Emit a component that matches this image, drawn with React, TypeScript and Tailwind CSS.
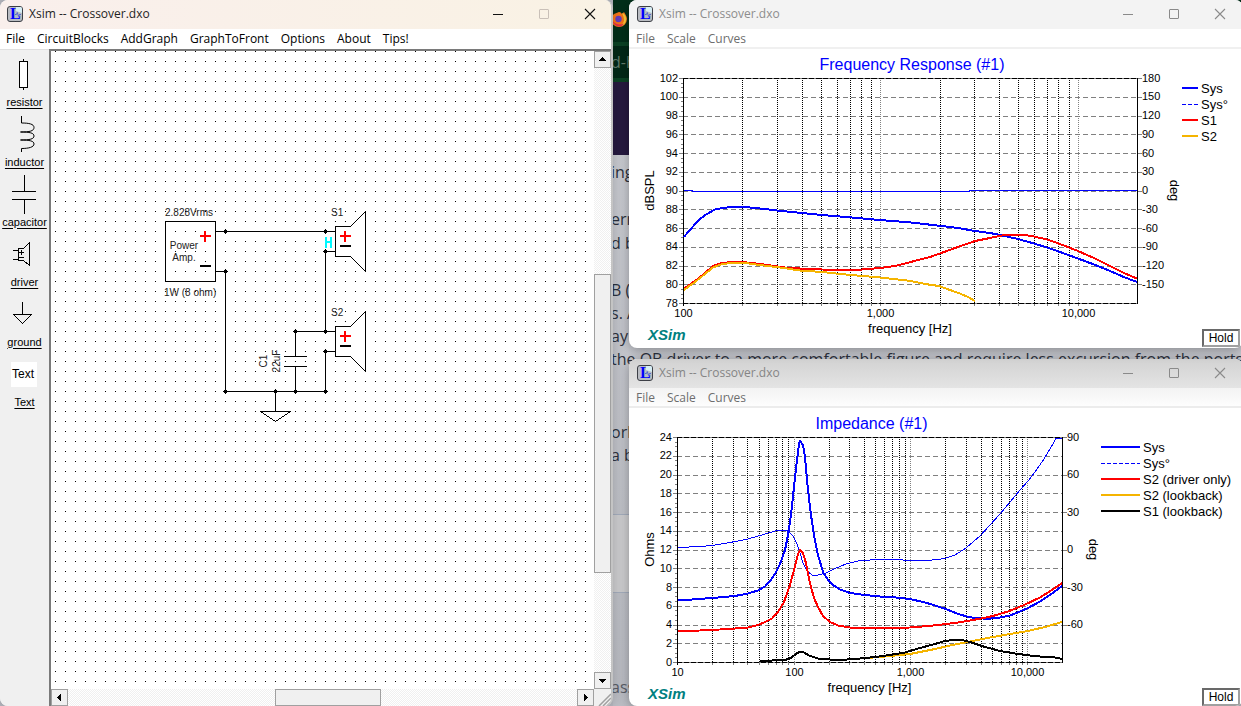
import React from "react";

type Point = [number, number];
type Curve = { color: string; width: number; points: Point[] };
type LegendEntry = { label: string; color: string; dashed?: boolean; width: number };

type ChartSpec = {
  title: string;
  viewBox: string;
  plot: { left: number; right: number; top: number; bottom: number };
  startHz: number;
  decade: number;
  yLabels: string[];
  yTitle: { text: string; gap: number };
  yMinor: number;
  degLabels: string[];
  degEvery: number;
  degGap: number;
  xLabels: [number, string][];
  legend: { x: number; length: number; entries: LegendEntry[] };
  curves: Curve[];
};

const BLUE = "#0000ff";
const RED = "#ff0000";
const AMBER = "#f5b400";

const response: ChartSpec = {
  title: "Frequency Response (#1)",
  viewBox: "629 49 614 299",
  plot: { left: 683, right: 1137, top: 78, bottom: 303 },
  startHz: 100,
  decade: 197.3,
  yLabels: ["102", "100", "98", "96", "94", "92", "90", "88", "86", "84", "82", "80", "78"],
  yTitle: { text: "dBSPL", gap: 29 },
  yMinor: 4,
  degLabels: ["180", "150", "120", "90", "60", "30", "0", "-30", "-60", "-90", "-120", "-150"],
  degEvery: 1,
  degGap: 33,
  xLabels: [
    [100, "100"],
    [1000, "1,000"],
    [10000, "10,000"],
  ],
  legend: {
    x: 1182,
    length: 16,
    entries: [
      { label: "Sys", color: BLUE, width: 2 },
      { label: "Sys°", color: BLUE, dashed: true, width: 1 },
      { label: "S1", color: RED, width: 2 },
      { label: "S2", color: AMBER, width: 2 },
    ],
  },
  curves: [
    { color: BLUE, width: 1, points: [[684, 190.5], [692, 190.5], [693, 191.5], [969, 191.5], [970, 190.5], [1137, 190.5]] },
    {
      color: BLUE,
      width: 2,
      points: [
        [684, 237], [688, 232], [693, 226.5], [700, 219], [706, 214.5], [715, 209.5], [722, 208], [733, 207], [745, 207],
        [760, 208.5], [777, 210.5], [802, 213], [822, 215], [846, 217], [880, 220], [911, 222.5], [939, 225.7], [958, 228],
        [975, 231], [990, 233], [1000, 235], [1018, 239], [1034, 243.5], [1047, 247.5], [1060, 252], [1078, 258.5],
        [1094, 264.5], [1110, 271], [1125, 277.5], [1137, 282],
      ],
    },
    {
      color: RED,
      width: 2,
      points: [
        [684, 288.5], [695, 281], [705, 273], [713, 266], [720, 263.5], [730, 262], [742, 262], [760, 264], [785, 267.5],
        [800, 268.5], [822, 269.5], [846, 270], [862, 269.5], [880, 268], [895, 266], [907, 263], [920, 259.5], [930, 257],
        [940, 253.5], [955, 248], [975, 241], [990, 238], [1002, 235.5], [1012, 234.5], [1022, 234.5], [1034, 236.5],
        [1047, 239.5], [1060, 244], [1078, 251], [1094, 258], [1110, 266], [1125, 273.5], [1137, 278.5],
      ],
    },
    {
      color: AMBER,
      width: 2,
      points: [
        [684, 290], [695, 282], [705, 274], [713, 267.5], [722, 264], [733, 263], [745, 263], [760, 265], [780, 267.5],
        [800, 270.5], [822, 272], [846, 274.5], [880, 277.5], [911, 281], [925, 284], [939, 286], [950, 290], [960, 293.5],
        [968, 297], [975, 301],
      ],
    },
  ],
};

const impedance: ChartSpec = {
  title: "Impedance (#1)",
  viewBox: "629 408 614 299",
  plot: { left: 677, right: 1062, top: 437, bottom: 662 },
  startHz: 10,
  decade: 116.65,
  yLabels: ["24", "22", "20", "18", "16", "14", "12", "10", "8", "6", "4", "2", "0"],
  yTitle: { text: "Ohms", gap: 23 },
  yMinor: 4,
  degLabels: ["90", "60", "30", "0", "-30", "-60"],
  degEvery: 2,
  degGap: 27,
  xLabels: [
    [10, "10"],
    [100, "100"],
    [1000, "1,000"],
    [10000, "10,000"],
  ],
  legend: {
    x: 1101,
    length: 39,
    entries: [
      { label: "Sys", color: BLUE, width: 2 },
      { label: "Sys°", color: BLUE, dashed: true, width: 1 },
      { label: "S2 (driver only)", color: RED, width: 2 },
      { label: "S2 (lookback)", color: AMBER, width: 2 },
      { label: "S1 (lookback)", color: "#000000", width: 2 },
    ],
  },
  curves: [
    {
      color: BLUE,
      width: 1,
      points: [
        [678, 547.5], [700, 546.5], [712, 545.5], [730, 542.5], [748, 539], [760, 535.5], [768, 533], [777, 530.5],
        [788, 531], [793, 536], [797, 544], [800, 553], [803, 563], [807, 571], [812, 575], [818, 575], [826, 573],
        [835, 568.5], [846, 564], [858, 561], [870, 560], [890, 559.5], [910, 560.3], [930, 560.3], [945, 558.5],
        [955, 555], [966, 548], [980, 536], [1000, 514], [1020, 490], [1028, 481], [1035, 472], [1044, 459], [1053, 444],
        [1056, 438.5], [1062, 438.5],
      ],
    },
    {
      color: BLUE,
      width: 2,
      points: [
        [678, 600], [692, 599.5], [712, 598], [735, 596], [748, 593.5], [758, 590.5], [765, 586.5], [770, 581], [775, 574],
        [780, 564], [785, 550], [788, 535], [791, 515], [794, 487], [797, 460], [799, 444], [800, 441], [803, 445],
        [805, 457], [808, 490], [811, 515], [814, 535], [818, 555], [823, 572], [828, 580], [833, 585], [840, 589.5],
        [850, 593], [865, 595], [880, 596.5], [896, 597.5], [910, 599], [925, 602.5], [935, 605.5], [946, 609],
        [958, 614], [967, 616.5], [975, 618], [988, 618.8], [1000, 617.5], [1010, 615.5], [1020, 611.5], [1028, 608],
        [1040, 601.5], [1050, 595], [1062, 586],
      ],
    },
    {
      color: RED,
      width: 2,
      points: [
        [678, 631], [700, 630.5], [712, 630], [735, 628.5], [748, 627.5], [758, 625], [765, 622], [772, 618.5],
        [778, 612], [784, 602], [790, 585], [795, 566], [798, 554], [800, 550], [803, 553], [806, 563], [810, 583],
        [814, 598], [818, 607], [823, 616], [830, 622], [838, 625.5], [850, 627.5], [870, 628.3], [890, 628],
        [910, 627.5], [925, 626.3], [940, 624.8], [958, 622.5], [970, 620.5], [981, 618.5], [993, 616], [1008, 611.5],
        [1024, 605], [1040, 597.5], [1052, 590], [1062, 583],
      ],
    },
    {
      color: AMBER,
      width: 2,
      points: [
        [860, 658.5], [880, 657], [910, 654], [935, 649], [950, 645.5], [960, 643.5], [970, 641.5], [990, 637.5],
        [1010, 634], [1028, 631], [1045, 627], [1062, 622],
      ],
    },
    {
      color: "#000000",
      width: 2,
      points: [
        [760, 661], [785, 660], [791, 658], [797, 653], [802, 651.5], [810, 656], [820, 659], [840, 660], [860, 658.5],
        [875, 657], [890, 655], [905, 652.5], [920, 648], [935, 644], [945, 641], [953, 640], [962, 640], [970, 642],
        [985, 647], [1000, 651], [1015, 653.5], [1030, 655.5], [1045, 657], [1055, 657.5], [1062, 659],
      ],
    },
  ],
};

const toPath = (points: Point[]) => "M" + points.map(([x, y]) => `${x} ${y}`).join("L");

const snap = (v: number) => Math.round(v) + 0.5;

function Chart({ spec }: { spec: ChartSpec }) {
  const { left, right, top, bottom } = spec.plot;
  const rows = spec.yLabels.length - 1;
  const rowStep = (bottom - top) / rows;
  const rowY = (i: number) => snap(top + i * rowStep);
  const labelY = (i: number) => Math.floor(top + i * rowStep) + 4;
  const hzX = (hz: number) => snap(left + spec.decade * Math.log10(hz / spec.startHz));
  const middle = (left + right) / 2;

  const verticals: { x: number; major: boolean }[] = [];
  for (let base = spec.startHz; base <= 10000; base *= 10) {
    for (let m = 1; m < 10; m++) {
      const hz = base * m;
      if (hz > spec.startHz && hz < 20000) verticals.push({ x: hzX(hz), major: m === 1 });
    }
  }

  return (
    <svg
      viewBox={spec.viewBox}
      className="block w-full font-['Liberation_Sans',Arial,sans-serif]"
      role="img"
      aria-label={spec.title}
    >
      <text x={middle + 2} y={top - 8} textAnchor="middle" fontSize="16" fill={BLUE}>
        {spec.title}
      </text>

      <g shapeRendering="crispEdges" fill="none">
        {spec.yLabels.map((_, i) => (
          <path
            key={i}
            d={`M${left} ${rowY(i)}H${right}`}
            stroke="#808080"
            strokeDasharray={i === 0 || i === rows ? undefined : "5 3"}
          />
        ))}
        {verticals.map(({ x, major }) => (
          <path
            key={x}
            d={`M${x} ${top}V${bottom}`}
            stroke={major ? "#808080" : "#000000"}
            strokeDasharray="1 1"
          />
        ))}
        {verticals.map(({ x }) => (
          <path key={x} d={`M${x} ${bottom}v3`} stroke="#808080" />
        ))}
        <path d={`M${left} ${top + 0.5}H${right}M${left} ${bottom + 0.5}H${right}`} stroke="#000000" strokeDasharray="5 2" />
        {spec.yLabels.map((_, i) => (
          <path key={i} d={`M${left - 4} ${rowY(i)}h4`} stroke="#808080" />
        ))}
        {Array.from({ length: rows * spec.yMinor }, (_, i) => (
          <path key={i} d={`M${left - 2} ${snap(top + (i * rowStep) / spec.yMinor)}h2`} stroke="#808080" />
        ))}
        {spec.degLabels.map((label, i) => (
          <path key={label} d={`M${right} ${rowY(i * spec.degEvery)}h5`} stroke="#808080" />
        ))}
        <path d={`M${left + 0.5} ${top}V${bottom + 3}M${right + 0.5} ${top}V${bottom + 1}`} stroke="#000000" />
        {spec.curves.map((curve, i) => (
          <path key={i} d={toPath(curve.points)} stroke={curve.color} strokeWidth={curve.width} strokeLinejoin="round" />
        ))}
      </g>

      <g fontSize="11" fill="#000000">
        {spec.yLabels.map((label, i) => (
          <text key={label} x={left - 5} y={labelY(i)} textAnchor="end">
            {label}
          </text>
        ))}
        {spec.degLabels.map((label, i) => (
          <text key={label} x={right + 5} y={labelY(i * spec.degEvery)}>
            {label}
          </text>
        ))}
        {spec.xLabels.map(([hz, label]) => (
          <text key={label} x={hzX(hz)} y={bottom + 14} textAnchor="middle">
            {label}
          </text>
        ))}
      </g>

      <g fontSize="13" fill="#000000">
        <text x={middle} y={bottom + 30} textAnchor="middle">
          frequency [Hz]
        </text>
        <text transform={`translate(${left - spec.yTitle.gap} ${(top + bottom) / 2}) rotate(-90)`} textAnchor="middle">
          {spec.yTitle.text}
        </text>
        <text transform={`translate(${right + spec.degGap} ${(top + bottom) / 2}) rotate(90)`} textAnchor="middle">
          deg
        </text>
        {spec.legend.entries.map((entry, i) => (
          <g key={entry.label}>
            <path
              d={`M${spec.legend.x} ${top + 10 + i * 16 + (entry.width === 1 ? 0.5 : 0)}h${spec.legend.length}`}
              stroke={entry.color}
              strokeWidth={entry.width}
              strokeDasharray={entry.dashed ? "4 2" : undefined}
              shapeRendering="crispEdges"
            />
            <text x={spec.legend.x + spec.legend.length + 3} y={top + 15 + i * 16}>
              {entry.label}
            </text>
          </g>
        ))}
      </g>

      <text x="648" y={bottom + 37} fontSize="15" fontWeight="bold" fontStyle="italic" fill="#008080">
        XSim
      </text>
    </svg>
  );
}

function AppIcon() {
  return (
    <svg viewBox="0 0 16 16" className="h-4 w-4 shrink-0" aria-hidden="true">
      <rect x="0.5" y="0.5" width="15" height="15" rx="2.5" fill="#b9bcc2" stroke="#3c3f46" />
      <path d="M9 1h4.500Q15 1 15 3v4L9 5z" fill="#d6eef5" />
      <path d="M8 8.500h1.500l.8-2 1.200 4 .8-2H14" fill="none" stroke="#4a60d0" strokeWidth="0.900" />
      <text x="3" y="13" fontFamily="'Liberation Serif', serif" fontWeight="bold" fontSize="16" fill="#0000ff">
        L
      </text>
    </svg>
  );
}

function CaptionButtons({ active }: { active: boolean }) {
  const ink = active ? "#111111" : "#8a8a8a";
  const box = active ? "#c9c0b8" : "#8a8a8a";
  return (
    <div className="ml-auto flex h-full">
      <button type="button" aria-label="Minimize" className="flex w-[46px] items-center justify-center">
        <svg viewBox="0 0 12 12" className="h-3 w-3">
          <path d="M1 6.500h10" stroke={ink} shapeRendering="crispEdges" />
        </svg>
      </button>
      <button type="button" aria-label="Maximize" className="flex w-[46px] items-center justify-center">
        <svg viewBox="0 0 12 12" className="h-3 w-3">
          <rect x="1.500" y="1.500" width="9" height="9" rx="0.500" fill="none" stroke={box} />
        </svg>
      </button>
      <button type="button" aria-label="Close" className="flex w-[46px] items-center justify-center">
        <svg viewBox="0 0 12 12" className="h-3 w-3">
          <path d="M1 1l10 10M11 1L1 11" stroke={ink} strokeWidth="1.100" />
        </svg>
      </button>
    </div>
  );
}

function MenuBar({ items, className }: { items: string[]; className: string }) {
  return (
    <nav className={className}>
      {items.map((item) => (
        <button type="button" key={item} className="whitespace-nowrap">
          {item}
        </button>
      ))}
    </nav>
  );
}

function GraphWindow({ spec, header, menu }: { spec: ChartSpec; header: string; menu: string }) {
  return (
    <section className="overflow-hidden rounded-lg bg-white shadow-[0_2px_12px_rgba(0,0,0,0.35)]">
      <header className={header}>
        <AppIcon />
        <span className="ml-1.5">Xsim -- Crossover.dxo</span>
        <CaptionButtons active={false} />
      </header>
      <MenuBar items={["File", "Scale", "Curves"]} className={menu} />
      <div className="relative">
        <Chart spec={spec} />
        <button
          type="button"
          className="absolute right-[3px] bottom-px h-[18px] w-[38px] border-2 border-t-[#696969] border-r-[#a0a0a0] border-b-[#a0a0a0] border-l-[#696969] bg-white font-['Liberation_Sans',Arial,sans-serif] text-xs leading-[14px] text-black"
        >
          Hold
        </button>
      </div>
    </section>
  );
}

const parts: { name: string; art: React.ReactNode }[] = [
  {
    name: "resistor",
    art: (
      <>
        <rect x="19.500" y="10.500" width="8" height="26" fill="#fff" />
        <path d="M23.500 8v2M23.500 37v2" />
      </>
    ),
  },
  {
    name: "inductor",
    art: (
      <path
        d="M21.500 5v7C29 12 34 13 34 16.500S30 21 20.500 21C30 21 34 22 34 25S30 29 20.500 29C30 29 34 30 34 33S29 37.500 21.500 37.500V41"
        shapeRendering="auto"
      />
    ),
  },
  { name: "capacitor", art: <path d="M24.500 4v16M12 20.500h24M12 28.500h24M24.500 29v14" /> },
  {
    name: "driver",
    art: (
      <path d="M18.500 17.500h5l6-6v23l-6-5h-5zM13 19.500h5M13 28.500h5M19 21.500h5M21.500 19v5M19 26.500h5" />
    ),
  },
  { name: "ground", art: <path d="M22.500 11v12M13.500 23.500h18l-9 9z" /> },
  {
    name: "Text",
    art: (
      <>
        <rect x="11" y="11" width="26" height="25" fill="#fff" stroke="none" />
        <text
          x="12"
          y="27"
          fontSize="12"
          fill="#000"
          stroke="none"
          fontFamily="'Liberation Sans', Arial, sans-serif"
          shapeRendering="auto"
        >
          Text
        </text>
      </>
    ),
  },
];

function Palette() {
  return (
    <aside className="w-[49px] shrink-0 border-t border-[#e0e0e0] bg-[#f0f0f0]">
      {parts.map((part) => (
        <button key={part.name} type="button" className="block h-[60px] w-full">
          <svg
            viewBox="0 0 49 43"
            className="block h-[43px] w-full"
            fill="none"
            stroke="#000"
            shapeRendering="crispEdges"
            aria-hidden="true"
          >
            {part.art}
          </svg>
          <span className="block h-4 text-center font-['Liberation_Sans',Arial,sans-serif] text-[11px] leading-4 underline underline-offset-2">
            {part.name}
          </span>
        </button>
      ))}
    </aside>
  );
}

const nodes: Point[] = [
  [170, 180], [270, 180], [270, 200], [170, 220], [240, 280], [270, 280], [270, 300], [170, 340], [220, 340], [240, 340],
  [270, 340],
];

function Speaker({ name, y }: { name: string; y: number }) {
  return (
    <g transform={`translate(280 ${y})`}>
      <path d="M15.500 0.500H0.500v30h15L30.500 45.500V-14.500z" fill="#fff" stroke="#000" />
      <path d="M5 10h11M10 5v11" stroke="#ff0000" strokeWidth="2" />
      <path d="M5 20h11" stroke="#000" strokeWidth="2" />
      <text x="-4" y="-10" fontSize="10" fill="#222" stroke="none">
        {name}
      </text>
    </g>
  );
}

function Schematic() {
  return (
    <svg
      className="block h-full w-full font-['Liberation_Sans',Arial,sans-serif]"
      shapeRendering="crispEdges"
      role="img"
      aria-label="Crossover schematic"
    >
      <defs>
        <pattern id="grid" width="10" height="10" patternUnits="userSpaceOnUse">
          <rect x="4" y="0" width="1" height="1" fill="#000" />
        </pattern>
      </defs>
      <rect width="100%" height="100%" fill="url(#grid)" />
      <g transform="translate(4 0)" fill="none" stroke="#000">
        <path d="M110.500 170.500h50v60h-50z" />
        <path d="M161 180.500h119M161 220.500h9.500v120h100V300.500h10M280 200.500h-9.500v80M280 280.500h-39.500v25M229 305.500h23M229 315.500h23M240.500 316v24M220.500 340v20M205.500 360.500h30l-15 10z" />
        <path d="M145 185h11M150 180v11" stroke="#ff0000" strokeWidth="2" />
        <path d="M145 215h11" strokeWidth="2" />
        <rect x="269" y="184" width="9" height="14" fill="#fff" stroke="none" />
        <path d="M271 186v11M276 186v11M271 191h5" stroke="#00f8ff" strokeWidth="2" />
        <g fill="#000" stroke="none">
          {nodes.map(([x, y]) => (
            <path key={`${x}-${y}`} d={`M${x - 1} ${y - 1}h3v3h-3zM${x} ${y - 2}h1v5h-1zM${x - 2} ${y}h5v1h-5z`} />
          ))}
        </g>
        <Speaker name="S1" y={175} />
        <Speaker name="S2" y={275} />
        <path d="M115 190h29v10h-29zM117 202h24v9h-24z" fill="#fff" stroke="none" />
        <g fill="#222" stroke="none" fontSize="10">
          <text x="110" y="165">2.828Vrms</text>
          <text x="109" y="245">1W (8 ohm)</text>
          <text x="129" y="198" textAnchor="middle">Power</text>
          <text x="129" y="210" textAnchor="middle">Amp.</text>
          <text transform="translate(212 310) rotate(-90)" textAnchor="middle">C1</text>
          <text transform="translate(225 310) rotate(-90)" textAnchor="middle">22uF</text>
        </g>
      </g>
    </svg>
  );
}

function ArrowButton({ label, d }: { label: string; d: string }) {
  return (
    <button
      type="button"
      aria-label={label}
      className="flex h-[17px] w-[17px] shrink-0 items-center justify-center border border-[#a0a0a0] bg-[#f0f0f0]"
    >
      <svg viewBox="0 0 9 9" className="h-[9px] w-[9px]" fill="#000" shapeRendering="crispEdges">
        <path d={d} />
      </svg>
    </button>
  );
}

function MainWindow() {
  return (
    <main className="relative z-20 flex h-full w-[613px] shrink-0 flex-col overflow-hidden rounded-lg border-r-2 border-[#c4c4c4] bg-[#f0f0f0] shadow-[0_0_16px_rgba(0,0,0,0.25)]">
      <header className="-mr-0.5 flex h-[29px] shrink-0 items-center bg-linear-to-r from-[#f9efec] to-[#f9f2e4] pb-0.5 pl-[7px] text-xs text-[#1f1f1f]">
        <AppIcon />
        <span className="ml-1.5">Xsim -- Crossover.dxo</span>
        <CaptionButtons active />
      </header>
      <MenuBar
        items={["File", "CircuitBlocks", "AddGraph", "GraphToFront", "Options", "About", "Tips!"]}
        className="flex h-5 shrink-0 items-center gap-3 bg-white pl-1.5 text-xs text-black"
      />
      <div className="flex min-h-0 flex-1">
        <Palette />
        <div className="flex min-w-0 flex-1 flex-col border-t-2 border-l-2 border-[#7a7a7a]">
          <div className="flex min-h-0 flex-1">
            <div className="min-w-0 flex-1 bg-white">
              <Schematic />
            </div>
            <div className="flex w-[17px] shrink-0 flex-col bg-[repeating-conic-gradient(#f0f0f0_0_25%,#fff_0_50%)] bg-[length:2px_2px]">
              <ArrowButton label="Scroll up" d="M4 2h1v1h1v1h1v1h1v1H1V5h1V4h1V3h1z" />
              <div className="grow-[207]" />
              <div className="grow-[298] border border-[#a0a0a0] bg-[#f0f0f0]" />
              <div className="grow-[99]" />
              <ArrowButton label="Scroll down" d="M1 3h7v1H7v1H6v1H5v1H4V6H3V5H2V4H1z" />
            </div>
          </div>
          <div className="flex h-[17px] shrink-0">
            <div className="flex min-w-0 flex-1 bg-[repeating-conic-gradient(#f0f0f0_0_25%,#fff_0_50%)] bg-[length:2px_2px]">
              <ArrowButton label="Scroll left" d="M6 1v7H5V7H4V6H3V5H2V4h1V3h1V2h1V1z" />
              <div className="grow-[207]" />
              <div className="grow-[104] border border-[#a0a0a0] bg-[#f0f0f0]" />
              <div className="grow-[196]" />
              <ArrowButton label="Scroll right" d="M3 1v7h1V7h1V6h1V5h1V4H6V3H5V2H4V1z" />
            </div>
            <svg viewBox="0 0 17 17" className="h-[17px] w-[17px] shrink-0" stroke="#a0a0a0" strokeWidth="1.500">
              <path d="M5 17L17 5M9 17l8-8M13 17l4-4" />
            </svg>
          </div>
        </div>
      </div>
    </main>
  );
}

function BrowserPage() {
  return (
    <div className="absolute inset-y-0 right-0 left-[613px] overflow-hidden bg-linear-to-b from-[#d2d4da] to-[#bfc1c8] text-base whitespace-nowrap text-[#2e3340]">
      <div className="flex h-[42px] items-center bg-[#03301a] pb-1">
        <svg viewBox="0 0 16 16" className="-ml-0.5 h-4 w-4" aria-hidden="true">
          <path d="M8 1c2 0 2 1 3 2l2-2c1 2 3 4 3 7a8 8 0 1 1-16 0c0-3 2-4 3-5z" fill="#ff7a1a" />
          <path d="M11 2c3 1 5 4 4 8-1 3-3 5-6 5 3-2 4-4 4-6 0-3-1-5-2-7z" fill="#ffd23a" />
          <path d="M1 9c1 4 4 7 8 6.500 2-.5 3-1.500 4-3-4 2-9 1-12-3.500z" fill="#f0304a" />
          <circle cx="7.500" cy="8" r="3.200" fill="#6a3fc4" />
        </svg>
      </div>
      <div className="flex h-10 items-center border-y-4 border-[#0c4526] bg-[#032a18] text-base text-[#66806f]">
        <span className="-ml-0.5">d-h</span>
      </div>
      <div className="h-[73px] bg-[#281b42]" />
      <div className="-ml-0.5 pt-[5px] leading-6">
        <p>ing</p>
        <p className="pt-[23px]">erm</p>
        <p>d by</p>
        <div className="pt-6 leading-[23px]">
          <p>B (</p>
          <p>s. A</p>
          <p>ay</p>
          <p>the OB driver to a more comfortable figure and require less excursion from the ports</p>
          <p className="pt-[50px]">ork</p>
          <p>a b</p>
        </div>
      </div>
      <div className="mt-[47px] h-[79px] border-y border-[#a9b2c2] bg-[#d2d2d4]" />
      <p className="-ml-0.5 pt-[82px] leading-6 text-[#5c606a]">ass</p>
    </div>
  );
}

export default function App() {
  return (
    <div className="relative flex h-screen gap-4 overflow-hidden bg-[#b8bac2] font-['Open_Sans','Noto_Sans',sans-serif]">
      <BrowserPage />
      <MainWindow />
      <div className="relative z-10 -mr-0.5 flex min-w-0 flex-1 flex-col gap-[11px]">
        <div className="relative z-10">
          <GraphWindow
            spec={response}
            header="flex h-[29px] items-center bg-[#f3f3f3] pb-0.5 pl-2 text-xs text-[#8d8d8d]"
            menu="flex h-5 items-center gap-3 border-b-2 border-[#f0f0f0] bg-white pt-0.5 pl-[7px] text-xs text-[#6d6d6d]"
          />
        </div>
        <GraphWindow
          spec={impedance}
          header="flex h-[29px] items-center bg-linear-to-b from-[#d2d2d2] to-[#e4e4e4] pb-0.5 pl-2 text-xs text-[#858585]"
          menu="flex h-5 items-center gap-3 border-b-2 border-[#ececec] bg-linear-to-b from-[#f3f3f3] to-[#fdfdfd] pt-0.5 pl-[7px] text-xs text-[#6d6d6d]"
        />
      </div>
    </div>
  );
}
